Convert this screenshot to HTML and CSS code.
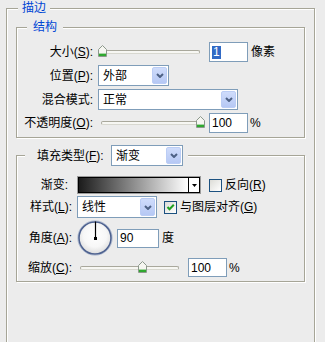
FILE: index.html
```html
<!DOCTYPE html>
<html>
<head>
<meta charset="utf-8">
<link rel="stylesheet" href="styles.css">
</head>
<body>
<fieldset class="group outer">
  <legend class="title outer-title">描边</legend>

  <fieldset class="group struct">
    <legend class="title struct-title">结构</legend>
    <div class="sform">
      <span class="lbl">大小(<u>S</u>):</span>
      <div class="ctrl">
        <div class="slider" style="--v:0">
          <span class="track"></span>
          <svg class="thumb" width="9" height="12" viewBox="0 0 9 12"><path d="M4.5 .5 8.5 4.5V11.5H.5V4.5Z" fill="#F6F6F1" stroke="#8C988C"/><rect x="1" y="8.6" width="7" height="2.4" fill="#2FA82F"/></svg>
        </div>
        <div class="field w39 ml4"><span class="hl">1</span></div>
        <span class="unit">像素</span>
      </div>

      <span class="lbl">位置(<u>P</u>):</span>
      <div class="ctrl">
        <div class="select w71"><span class="val">外部</span><span class="btn"><svg width="8" height="5" viewBox="0 0 8 5"><path d="M1 1 4 4 7 1" fill="none" stroke="#4D6185" stroke-width="2"/></svg></span></div>
      </div>

      <span class="lbl">混合模式:</span>
      <div class="ctrl">
        <div class="select w140"><span class="val">正常</span><span class="btn"><svg width="8" height="5" viewBox="0 0 8 5"><path d="M1 1 4 4 7 1" fill="none" stroke="#4D6185" stroke-width="2"/></svg></span></div>
      </div>

      <span class="lbl">不透明度(<u>O</u>):</span>
      <div class="ctrl">
        <div class="slider" style="--v:1">
          <span class="track"></span>
          <svg class="thumb" width="9" height="12" viewBox="0 0 9 12"><path d="M4.5 .5 8.5 4.5V11.5H.5V4.5Z" fill="#F6F6F1" stroke="#8C988C"/><rect x="1" y="8.6" width="7" height="2.4" fill="#2FA82F"/></svg>
        </div>
        <div class="field w39 ml4">100</div>
        <span class="unit pct">%</span>
      </div>
    </div>
  </fieldset>

  <fieldset class="group fill">
    <legend class="fill-legend">
      <span class="llbl">填充类型(<u>F</u>):</span>
      <div class="select w72"><span class="val">渐变</span><span class="btn"><svg width="8" height="5" viewBox="0 0 8 5"><path d="M1 1 4 4 7 1" fill="none" stroke="#4D6185" stroke-width="2"/></svg></span></div>
    </legend>

    <div class="frow r1">
      <span class="flbl pr4">渐变:</span>
      <div class="grad">
        <div class="grad-in">
          <span class="grad-fill"></span>
          <span class="grad-arrow"><svg width="5" height="3" viewBox="0 0 5 3"><path d="M0 0H5L2.5 3Z" fill="#000"/></svg></span>
        </div>
      </div>
      <span class="check ml8"></span>
      <span class="clbl">反向(<u>R</u>)</span>
    </div>

    <div class="frow r2">
      <span class="flbl">样式(<u>L</u>):</span>
      <div class="select w80 h22"><span class="val">线性</span><span class="btn"><svg width="8" height="5" viewBox="0 0 8 5"><path d="M1 1 4 4 7 1" fill="none" stroke="#4D6185" stroke-width="2"/></svg></span></div>
      <span class="check ml7"><svg width="11" height="11" viewBox="0 0 11 11"><path d="M2.5 5 4.5 7.2 8.8 2.8" fill="none" stroke="#21A121" stroke-width="2"/></svg></span>
      <span class="clbl">与图层对齐(<u>G</u>)</span>
    </div>

    <div class="frow r3">
      <span class="flbl">角度(<u>A</u>):</span>
      <svg class="dial" width="36" height="36" viewBox="0 0 36 36">
        <defs>
          <radialGradient id="dialg" cx="50%" cy="42%" r="60%">
            <stop offset="0" stop-color="#FFFFFF"/>
            <stop offset="0.6" stop-color="#F7F7F7"/>
            <stop offset="1" stop-color="#DADADA"/>
          </radialGradient>
        </defs>
        <circle cx="18" cy="18" r="17.2" fill="none" stroke="#B4BFD4" stroke-width="1"/>
        <circle cx="18" cy="18" r="16" fill="url(#dialg)" stroke="#4E6290" stroke-width="1.6"/>
        <path d="M18.5 1.5V18" stroke="#000" stroke-width="1.2"/>
        <rect x="17" y="17" width="3" height="3" fill="#000"/>
      </svg>
      <div class="field w42 h19 ml4">90</div>
      <span class="unit">度</span>
    </div>

    <div class="frow r4">
      <span class="flbl">缩放(<u>C</u>):</span>
      <div class="slider" style="--v:0.62">
        <span class="track"></span>
        <svg class="thumb" width="9" height="12" viewBox="0 0 9 12"><path d="M4.5 .5 8.5 4.5V11.5H.5V4.5Z" fill="#F6F6F1" stroke="#8C988C"/><rect x="1" y="8.6" width="7" height="2.4" fill="#2FA82F"/></svg>
      </div>
      <div class="field w39 h19 ml4">100</div>
      <span class="unit pct">%</span>
    </div>
  </fieldset>
</fieldset>
</body>
</html>
```

FILE: styles.css
```css
html, body {
  margin: 0;
  padding: 0;
  background: #ECECEC;
}

body {
  width: 325px;
  height: 342px;
  overflow: hidden;
  font: 12px/16px "Liberation Sans", "Noto Sans CJK SC", sans-serif;
  color: #000;
}

u {
  text-decoration: underline;
  text-underline-offset: 1px;
}

/* etched group boxes */
.group {
  margin: 0;
  min-width: 0;
  box-sizing: border-box;
  border: 1px solid #A6A597;
  box-shadow: inset 1px 1px 0 #FFFFFF, 1px 1px 0 #FFFFFF;
}

.title {
  color: #0046D5;
  background: #ECECEC;
  height: 17px;
  line-height: 17px;
}

.outer {
  margin-left: 6px;
  width: 309px;
  height: 342px;
  padding: 2px 9px 0 9px;
  border-bottom: none;
}

.outer-title {
  margin-left: 2px;
  padding: 0 4px;
}

.struct {
  width: 289px;
  padding: 6px 0 4px 0;
}

.struct-title {
  margin-left: 10px;
  padding: 0 6px;
}

.fill {
  width: 289px;
  margin-top: 7px;
  padding: 10px 0 4px 0;
}

.fill-legend {
  display: flex;
  align-items: center;
  height: 21px;
  margin-left: 8px;
  padding: 0 5px 0 12px;
  background: #ECECEC;
}

.llbl {
  width: 68px;
  margin-right: 6px;
  white-space: nowrap;
}

/* structure grid */
.sform {
  display: grid;
  grid-template-columns: 76px 1fr;
  grid-template-rows: 20px 21px 21px 20px;
  column-gap: 5px;
  row-gap: 3px;
}

.lbl {
  text-align: right;
  align-self: center;
  white-space: nowrap;
}

.ctrl {
  display: flex;
  align-items: center;
  height: 100%;
}

/* fill rows */
.frow {
  display: flex;
  align-items: center;
}

.frow + .frow {
  margin-top: 2px;
}

.r1 { height: 18px; }
.r2 { height: 22px; }
.r3 { height: 36px; }
.r4 { height: 19px; }

.flbl {
  flex: none;
  width: 55px;
  margin-right: 5px;
  text-align: right;
  white-space: nowrap;
}

.pr4 {
  width: 51px;
  margin-right: 9px;
}

/* slider */
.slider {
  position: relative;
  flex: none;
  width: 107px;
  height: 100%;
}

.track {
  position: absolute;
  left: 3px;
  width: 99px;
  top: calc(50% - 2px);
  height: 4px;
  box-sizing: border-box;
  border: 1px solid #A9A89C;
  border-bottom-color: #D8D8D0;
  border-radius: 2px;
  background: #F7F7F3;
}

.thumb {
  position: absolute;
  top: calc(50% - 7px);
  left: calc((100% - 9px) * var(--v));
  display: block;
}

/* text field */
.field {
  flex: none;
  display: flex;
  align-items: center;
  box-sizing: border-box;
  height: 20px;
  padding-left: 2px;
  border: 1px solid #7F9DB9;
  background: #FFFFFF;
  white-space: nowrap;
}

.hl {
  display: inline-block;
  height: 13px;
  line-height: 13px;
  padding: 0 1px;
  background: #316AC5;
  color: #FFFFFF;
}

.w39 { width: 39px; }
.w42 { width: 42px; }
.h19 { height: 19px; }
.ml4 { margin-left: 4px; }
.ml7 { margin-left: 7px; }
.ml8 { margin-left: 8px; }

.unit {
  margin-left: 3px;
  white-space: nowrap;
}

.pct {
  margin-left: 2px;
}

/* select */
.select {
  flex: none;
  display: flex;
  align-items: stretch;
  box-sizing: border-box;
  height: 21px;
  padding: 1px;
  border: 1px solid #7F9DB9;
  background: #FFFFFF;
}

.w71 { width: 71px; }
.w72 { width: 72px; }
.w80 { width: 80px; }
.w140 { width: 140px; }
.h22 { height: 22px; }

.val {
  flex: 1;
  display: flex;
  align-items: center;
  padding-left: 3px;
  white-space: nowrap;
}

.btn {
  flex: none;
  width: 15px;
  box-sizing: border-box;
  display: flex;
  align-items: center;
  justify-content: center;
  border: 1px solid #BBCDF5;
  border-radius: 2px;
  background: linear-gradient(#CFDCFB, #B6C8F4);
}

.btn svg {
  display: block;
}

/* gradient preview */
.grad {
  flex: none;
  width: 124px;
  height: 18px;
  box-sizing: border-box;
  border: 1px solid #9C9C9C;
}

.grad-in {
  display: flex;
  height: 100%;
  box-sizing: border-box;
  border: 1px solid #000;
}

.grad-fill {
  flex: 1;
  background: linear-gradient(to right, #1C1C1C, #FFFFFF);
}

.grad-arrow {
  flex: none;
  width: 10px;
  display: flex;
  align-items: center;
  justify-content: center;
  border-left: 1px solid #000;
  background: #FFFFFF;
}

.grad-arrow svg {
  display: block;
}

/* checkbox */
.check {
  flex: none;
  width: 13px;
  height: 13px;
  box-sizing: border-box;
  display: flex;
  align-items: center;
  justify-content: center;
  border: 1px solid #1C5180;
  background: linear-gradient(135deg, #DCDCD7, #FFFFFF);
}

.check svg {
  display: block;
}

.clbl {
  margin-left: 3px;
  white-space: nowrap;
}

.dial {
  flex: none;
  display: block;
}
```
